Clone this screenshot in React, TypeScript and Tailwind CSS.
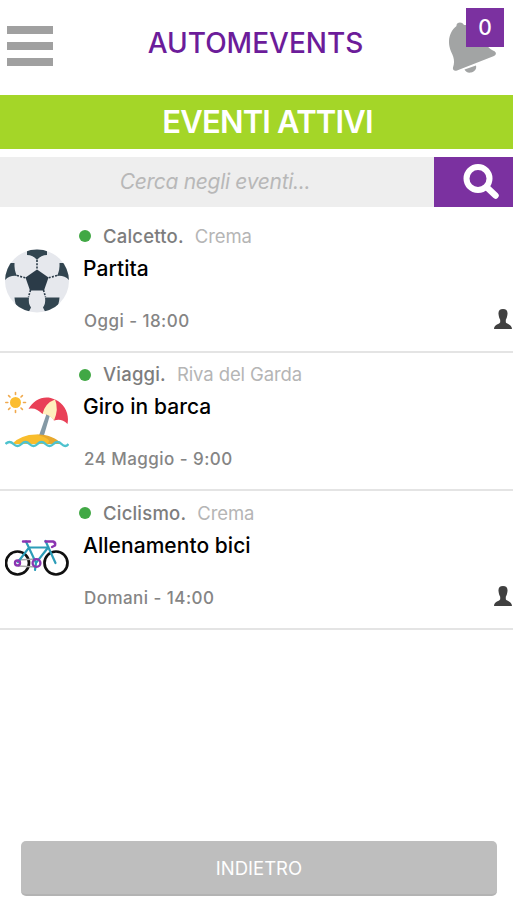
type EventItem = {
  category: string
  place: string
  title: string
  date: string
  icon: React.ReactNode
  joined: boolean
}

function BallIcon() {
  return (
    <svg viewBox="0 0 64 64" className="block h-16 w-16">
      <defs>
        <clipPath id="ball">
          <ellipse cx="32" cy="32" rx="32" ry="31.5" />
        </clipPath>
      </defs>
      <g clipPath="url(#ball)">
        <rect width="64" height="64" fill="#e6e8ed" />
        <g fill="#324550">
          <path d="M22 0h20v6q-6 0-10 5-4-5-10-5z" />
          <path d="M0 31V14h9.500q-.5 7 2.500 13-7-1-12 4z" />
          <path d="M64 31V14H54.500q.5 7-2.500 13 7-1 12 4z" />
          <path d="M9.500 48.500h14.500q-1 6 2 10l-2 4H14q-4-6-4.500-14z" />
          <path d="M54.500 48.500H40q1 6-2 10l2 4h10q4-6 4.500-14z" />
        </g>
        <path d="M32 20.500 43.500 28.500l-4.500 13H25l-4.500-13z" fill="#2b3b48" />
        <g stroke="#2b3b48" strokeWidth="1.600" strokeDasharray="2 1.300">
          <path d="M32 11v10M12 26.500l9 2.500M52 26.500l-9 2.500M25.500 41l-2 7M38.500 41l2 7" />
        </g>
      </g>
    </svg>
  )
}

function BeachIcon() {
  return (
    <svg viewBox="0 0 64 64" className="block h-16 w-16">
      <circle cx="10.500" cy="14.500" r="5.500" fill="#fbbd30" />
      <g stroke="#f0a94d" strokeWidth="1.600" strokeLinecap="round">
        <path d="M10.500 4.500v2M10.500 22.500v2M.8 14.500h2M18.500 14.500h2M3.600 7.600l1.400 1.400M16 20l1.400 1.400M17.400 7.600 16 9M5 20l-1.400 1.400" />
      </g>
      <path d="m41.500 26 3.500 1-6.500 22h-5z" fill="#8499a5" />
      <path d="M23.500 21C29 11 40 6.500 50 11.500 60 16 64.500 26 62.500 36 58 31.500 54 31 49 32.500 46.500 28 42.500 25.500 37.500 26 33 21.500 28.500 19.500 23.500 21z" fill="#e94057" />
      <path d="M50 11.500Q40 15 37.500 26q6-1 11.500 6.500Q54 21 50 11.500z" fill="#fff0bd" />
      <path d="M7 56q9-9.500 24-9.500T56 56z" fill="#f9bd2c" />
      <path d="M31 46.500q18 0 25 9.500H42q7-5-11-9.500z" fill="#e7a82d" />
      <path d="M.5 56q4-4 8 0t8 0 8 0 8 0 8 0 8 0 8 0 7 0" fill="none" stroke="#4dc2ce" strokeWidth="2.400" />
    </svg>
  )
}

function BikeIcon() {
  return (
    <svg viewBox="0 0 64 64" className="block h-16 w-16" fill="none">
      <g stroke="#101010" strokeWidth="2.700">
        <circle cx="12.500" cy="37" r="11.500" />
        <circle cx="51" cy="37" r="11.500" />
      </g>
      <path d="M13 34 31 33M13 40 31 41" stroke="#a8a8a8" strokeWidth="1.600" />
      <g stroke="#2c9db8" strokeWidth="2.200" strokeLinecap="round">
        <path d="M13 36 24 21.500h19M21 15.500 31 37 43.500 21M40.500 15 50.500 37M31 37l-1 7" />
      </g>
      <g stroke="#8b35b1" strokeWidth="2.400" strokeLinecap="round">
        <path d="M18 15.500h7M40.500 15.500h7.500q3 1 2 4l-3 1.500" />
        <circle cx="12.500" cy="37" r="2.500" />
        <circle cx="31.500" cy="37" r="3.900" />
      </g>
    </svg>
  )
}

function PersonIcon() {
  return (
    <svg viewBox="0 0 18 20" className="block h-5 w-[18px]" fill="#404040">
      <path d="M9 0c3.300 0 4.800 1.700 4.500 5.100-.2 2.700-1 4.500-1.700 5.700v2.400c.3 1.800 6.200 1.900 6.200 6.800H0c0-4.900 5.900-5 6.200-6.800v-2.400C5.500 9.600 4.700 7.800 4.500 5.100 4.200 1.700 5.700 0 9 0z" />
    </svg>
  )
}

function BellIcon() {
  return (
    <svg viewBox="0 0 50 52" className="block h-[52px] w-[50px]" fill="#a2a4a4">
      <path d="M7.500 5C7 1 13 0 15 4c10-1 15 5 19 13 4 9 7 11 11 13 3 1.500 2 4 0 5L8 49.500c-3 1-4.500-1-4-3 2-6 1-10-2-16C-2 21 0 11 7.500 5z" />
      <path d="M15.500 48.500 27 44.500c1 4-2 6.500-5 7-3 .5-5.500-.5-6.500-3z" />
    </svg>
  )
}

const events: EventItem[] = [
  { category: "Calcetto.", place: "Crema", title: "Partita", date: "Oggi - 18:00", icon: <BallIcon />, joined: true },
  { category: "Viaggi.", place: "Riva del Garda", title: "Giro in barca", date: "24 Maggio - 9:00", icon: <BeachIcon />, joined: false },
  { category: "Ciclismo.", place: "Crema", title: "Allenamento bici", date: "Domani - 14:00", icon: <BikeIcon />, joined: true },
]

function EventRow({ event }: { event: EventItem }) {
  return (
    <li className="flex h-[138.500px] border-b-2 border-[#e4e4e4] pl-[5px]">
      <div className="w-[78px] shrink-0 pt-[35px]">{event.icon}</div>
      <div className="flex-1 whitespace-nowrap pt-[10px]">
        <div className="-ml-1 flex h-6 items-center text-[18.500px]">
          <span className="mr-3 h-3 w-3 rounded-full bg-[#41a845]" />
          <span className="pt-px font-medium tracking-[0.200px] text-[#7d7d7d]">{event.category}</span>
          <span className="ml-[11px] pt-px tracking-[-0.100px] text-[#b5b5b5]">{event.place}</span>
        </div>
        <h2 className="mt-[5.500px] text-[21px] font-medium leading-[30px] tracking-[0.050px] text-black">{event.title}</h2>
        <p className="mt-[25px] pl-px text-[17px] font-medium leading-6 tracking-[0.450px] text-[#858585]">{event.date}</p>
      </div>
      <div className="w-[19px] shrink-0 pt-[95px]">{event.joined && <PersonIcon />}</div>
    </li>
  )
}

export default function App() {
  return (
    <div className="flex h-[900px] w-[513px] flex-col overflow-hidden bg-white font-['Inter','Liberation_Sans',sans-serif]">
      <header className="flex h-[95px] shrink-0 justify-between pl-[7px] pr-[14px]">
        <button type="button" aria-label="Menu" className="flex h-[66px] w-[46px] flex-col gap-2 pt-[26px]">
          <span className="h-2 w-full bg-[#a0a0a0]" />
          <span className="h-2 w-full bg-[#a0a0a0]" />
          <span className="h-2 w-full bg-[#a0a0a0]" />
        </button>
        <h1 className="ml-[9px] pt-[25px] text-[28px] font-medium leading-9 text-[#6c1c9a]">AUTOMEVENTS</h1>
        <div className="relative w-[50px] pt-[21px]">
          <BellIcon />
          <span className="absolute left-[17px] top-[8px] flex h-[39px] w-[38px] items-center justify-center bg-[#7b31a0] pt-px text-[21px] font-medium text-white">0</span>
        </div>
      </header>
      <div className="flex h-[54px] shrink-0 items-center justify-center bg-[#a4d628] pl-[22px] text-[31px] font-semibold tracking-[-0.800px] text-white">EVENTI ATTIVI</div>
      <div className="mt-[7.500px] flex h-[50px] shrink-0">
        <input
          type="text"
          placeholder="Cerca negli eventi..."
          className="w-[434px] bg-[#eeeeee] pr-1 text-center text-[21px] italic tracking-[-0.300px] placeholder:text-[#b8b8b8] placeholder:opacity-100"
        />
        <button type="button" aria-label="Cerca" className="flex-1 bg-[#7b31a0] pl-[29px]">
          <svg viewBox="0 0 36 36" className="block h-9 w-9" fill="none" stroke="white" strokeLinecap="round">
            <circle cx="15" cy="14.500" r="11.500" strokeWidth="6" />
            <path d="m24 23.500 8.500 8" strokeWidth="6.500" />
          </svg>
        </button>
      </div>
      <ul className="mt-[7.500px] flex-1">
        {events.map((event) => (
          <EventRow key={event.title} event={event} />
        ))}
      </ul>
      <button type="button" className="mb-[4px] ml-[21px] h-[55px] w-[476px] shrink-0 rounded-[5px] border-b-2 border-[#b3b3b3] bg-[#bebebe] pt-[3px] text-[18.500px] text-white">INDIETRO</button>
    </div>
  )
}
